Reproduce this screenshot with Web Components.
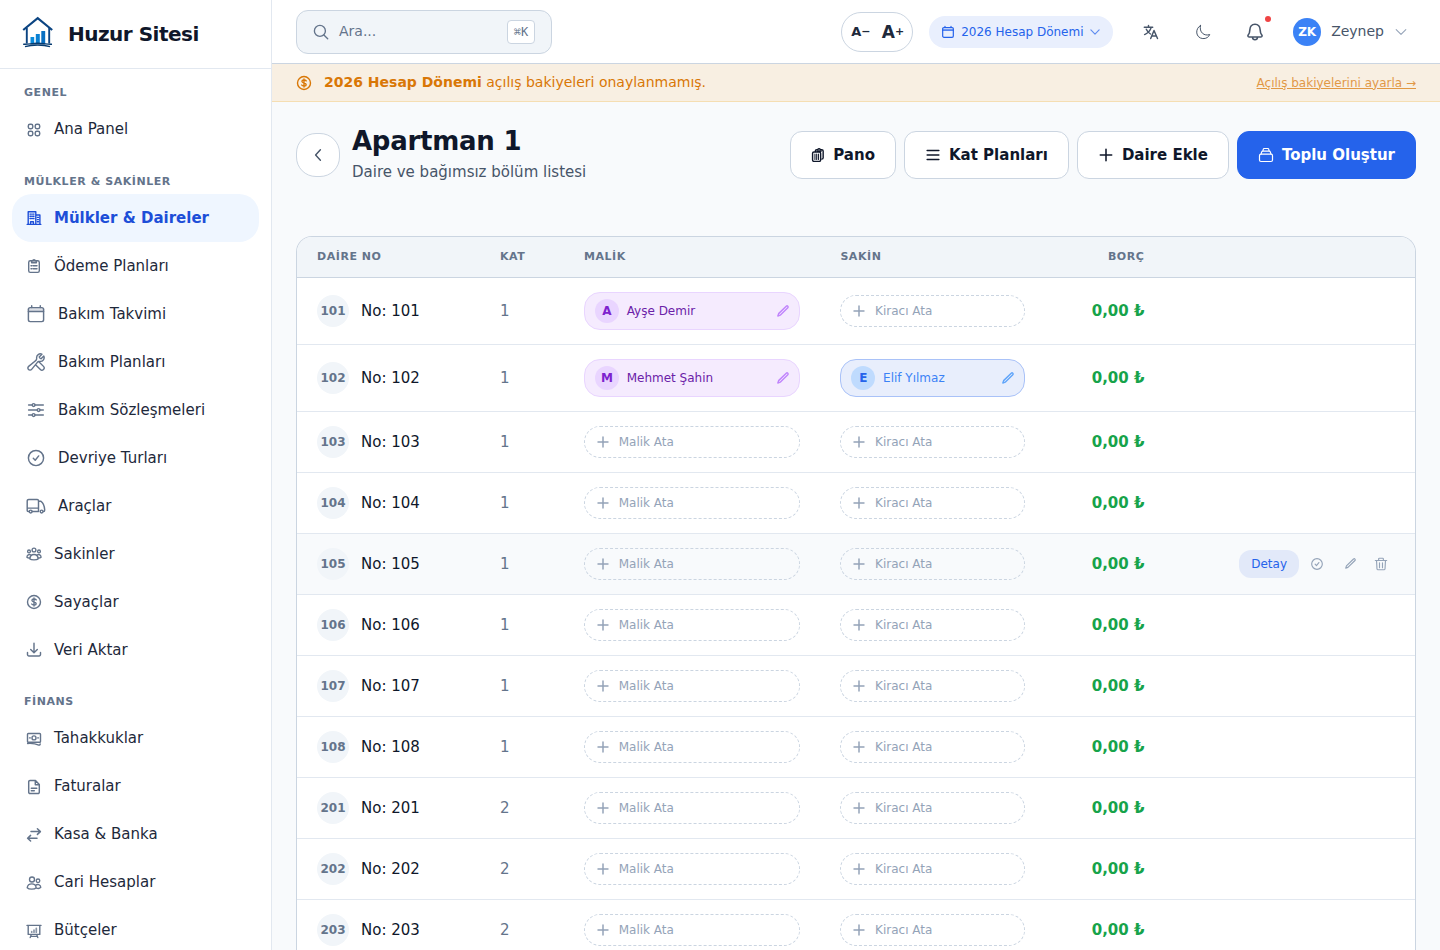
<!DOCTYPE html>
<html lang="tr">
<head>
<meta charset="utf-8">
<title>Huzur Sitesi</title>
<style>
html,body{margin:0;height:100%;overflow:hidden;background:#f8fafc;font-family:"DejaVu Sans",sans-serif;font-size:15px;color:#0f172a}
</style>
</head>
<body>
<site-app></site-app>
<script>
function define(name, render) {
  customElements.define(name, class extends HTMLElement {
    connectedCallback() {
      if (this.shadowRoot) return;
      this.attachShadow({ mode: 'open' }).innerHTML = '<style>*{box-sizing:border-box}</style>' + render(this);
    }
  });
}
const a = (el, n, d = '') => el.getAttribute(n) ?? d;

/* Each entry: [viewBox size, stroke width, markup] */
const ICONS = {
  apps: [16, 1.45, '<rect x="2.300" y="2.300" width="4.500" height="4.500" rx="1.700"/><rect x="9.200" y="2.300" width="4.500" height="4.500" rx="1.700"/><rect x="2.300" y="9.200" width="4.500" height="4.500" rx="1.700"/><rect x="9.200" y="9.200" width="4.500" height="4.500" rx="1.700"/>'],
  building: [16, 1.4, '<path d="M1.200 14.400h13.600M2.200 14.200V1.800h7.600v12.400M9.900 5h4v9.200M4.600 14v-2.300h2.800V14"/><path d="M4 4.100h1.400m1.200 0H8M4 6.300h1.400m1.200 0H8M4 8.500h1.400m1.200 0H8M11.300 7.400h1.200m-1.200 2.200h1.200m-1.200 2.200h1.200"/>'],
  clipboard: [16, 1.4, '<rect x="2.700" y="2.800" width="10.600" height="11.600" rx="1.600"/><path d="M5.600 4.700V2.900h1.200a1.200 1.200 0 0 1 2.400 0h1.200v1.800z"/><path d="M5 7.700h.9M7.200 7.700H11M5 10.700h.9M7.200 10.700H11"/>'],
  calendar: [20, 1.45, '<rect x="2.400" y="3.600" width="15.200" height="14" rx="1.800"/><path d="M2.400 7.400h15.200M5.700 3.400V1.800m8.600 1.600V1.800"/><path d="M3 5.500h14" stroke-width="3" opacity=".22"/>'],
  tools: [24, 1.7, '<path d="M11.420 15.170L17.250 21A2.652 2.652 0 0021 17.250l-5.877-5.877M11.420 15.170l2.496-3.030c.317-.384.740-.626 1.208-.766M11.420 15.170l-4.655 5.653a2.548 2.548 0 11-3.586-3.586l6.837-5.630m5.108-.233c.550-.164 1.163-.188 1.743-.140a4.500 4.500 0 004.486-6.336l-3.276 3.277a3.004 3.004 0 01-2.250-2.250l3.276-3.276a4.500 4.500 0 00-6.336 4.486c.091 1.076-.071 2.264-.904 2.950l-1.847 1.522-1.745 1.437"/>'],
  sliders: [20, 1.45, '<path d="M2.600 5h3.700m2.800 0h8.200M2.600 10h8.600m2.800 0h3.300M2.600 15h3.700m2.800 0h8.200"/><circle cx="7.600" cy="5" r="1.400"/><circle cx="12.600" cy="10" r="1.400"/><circle cx="7.600" cy="15" r="1.400"/>'],
  check: [20, 1.45, '<circle cx="10" cy="10" r="7.600"/><path d="M7.300 10.300l1.900 1.900 3.500-4.300"/>'],
  truck: [20, 1.45, '<path d="M3.100 15.400H2.200a1 1 0 0 1-1-1V5a1.600 1.600 0 0 1 1.600-1.600h8.400A1.300 1.300 0 0 1 12.500 4.700v10.700H6.300M1.300 12.100h11M12.500 5.300h2.500c2 1.300 3.400 4.600 3.700 8.600 0 1-.3 1.500-1.100 1.500"/><circle cx="4.700" cy="15.500" r="1.400"/><circle cx="15.600" cy="15.500" r="1.400"/>'],
  group: [16, 1.35, '<circle cx="8" cy="4" r="1.900"/><circle cx="3" cy="5.400" r="1.400"/><circle cx="13" cy="5.400" r="1.400"/><path d="M3.900 13c0-3 1.700-4.500 4.100-4.500s4.100 1.500 4.100 4.500c-1.200 1.200-7 1.200-8.200 0z"/><path d="M4.500 8.800C3 8 1 8.800.9 11.200c.8.700 1.800.9 2.800.8M11.500 8.800c1.500-.8 3.500 0 3.600 2.400-.8.700-1.800.9-2.800.8"/>'],
  coin: [16, 1.4, '<circle cx="8" cy="8" r="6.500"/><path d="M10.200 5.900C9.500 4.600 6 4.500 5.900 6.400 5.800 8.400 10.200 7.500 10.200 9.700c0 1.900-3.700 1.800-4.500.3M8 3.900v8.200"/>'],
  download: [16, 1.45, '<path d="M8 1.300v9.200M4.700 7.500L8 10.700l3.300-3.200M1.500 10.400v2.200a1.400 1.400 0 0 0 1.400 1.400h10.200a1.400 1.400 0 0 0 1.400-1.400v-2.200"/>'],
  cash: [16, 1.4, '<rect x="1.500" y="2.500" width="13" height="8.800" rx=".8"/><circle cx="8" cy="6.900" r="2"/><path d="M3.500 6.900h.8m7.400 0h.8M1.600 12.500c4.600-.3 8 .1 11.200 1.600.8.100 1.300-.2 1.400-1.200"/>'],
  file: [16, 1.45, '<path d="M9.500 1.500H4a1.300 1.300 0 0 0-1.300 1.300v10.400A1.300 1.300 0 0 0 4 14.500h8a1.300 1.300 0 0 0 1.300-1.300V5.500zM9.300 1.700v4h3.900M5.300 9.300h5.500M5.300 11.700h3"/>'],
  swap: [16, 1.5, '<path d="M5 4.600h9.200M11.400 1.800l3 2.800-3 2.800M11 11.200H1.800M4.600 8.400l-3 2.800 3 2.800"/>'],
  users: [16, 1.35, '<circle cx="6" cy="4.500" r="2.500"/><circle cx="12" cy="5.800" r="1.800"/><path d="M1.200 12.700C1.600 10 3.300 8.800 5.800 8.800s4 1.200 4.400 3.900c-1.600 1.900-7.300 1.900-9 0zM9.800 10.300c1.500-1.500 4.700-.8 5 2-.8.900-3 1.300-4.400.8"/>'],
  board: [16, 1.4, '<path d="M1 2.400h14M2.200 2.500v8.900h11.600V2.500M5.200 11.600l-1 3m6.600-3l1 3M4.800 13.400h6.400"/><path d="M5.700 9.200v-.5M8 9.200V7.200M10.300 9.200V5.400" stroke-width="1.700" opacity=".75"/>'],
  search: [16, 1.35, '<circle cx="6.900" cy="6.900" r="5.500"/><path d="M10.900 10.900l3.800 3.800"/>'],
  chevron: [16, 1.2, '<path d="M2.500 5.200L8 10.800l5.500-5.600"/>'],
  back: [16, 1.4, '<path d="M10.400 2.700L5.600 8l4.800 5.300"/>'],
  lang: [16, 1.45, '<path d="M1.300 3.200h8.400M5.500 1.500v1.700M8.200 3.400C7.200 7 4.800 9.300 1.600 10.600M3.300 5.200c1 2.300 2.500 3.800 4.200 4.800M7.700 14.500l3.300-8 3.500 8M8.900 12h4.500"/>'],
  moon: [16, 1, '<path d="M5.500 1.500C-.3 4.600.5 13.900 7.800 14.600c3.500.2 6-1.600 6.900-4.100C9.400 12.500 3.800 8.400 5.500 1.500z"/>'],
  bell: [20, 1.55, '<path d="M4.100 14.900h11.800c1.400 0 1.500-1.300.8-2-1.300-1.300-1.400-2.500-1.500-4.800C15 4.600 13.300 2.300 10 2.300S5 4.600 4.800 8.100c-.1 2.300-.2 3.500-1.500 4.800-.7.700-.6 2 .8 2zM7.500 15.200c.2 3.300 4.800 3.300 5 0"/>'],
  plus: [16, 1.55, '<path d="M8 2.300v11.400M2.300 8h11.400"/>'],
  menu: [16, 1.6, '<path d="M2.200 3.500h11.600M2.200 8h11.600M2.200 12.500h11.600"/>'],
  pano: [16, 1.6, '<path d="M5 4V3.200C5 2.300 5.500 2 6.500 2h1a1.800 1.800 0 0 1 3.400 0h1.400c1.100 0 1.600.5 1.600 1.500v7.700c0 1-.5 1.500-1.600 1.500"/><path d="M11 13.800c0 1-.4 1.500-1.400 1.500H3.300c-1 0-1.500-.5-1.500-1.500V6c0-1 .5-1.500 1.500-1.500h6.300c1 0 1.400.5 1.400 1.500zM7.200 3.500h4.500"/><path d="M4.500 7v6M6.500 7v6M8.500 7v6" stroke-width="1.200"/>'],
  stack: [16, 1.2, '<rect x="1.500" y="7.200" width="13" height="7.300" rx="1.500"/><path d="M3.100 6.800l.5-1.700c.2-.6.500-.9 1.200-.9h6.400c.7 0 1 .3 1.200.9l.5 1.700M4.800 4l.4-1.600c.1-.6.500-.9 1.100-.9h3.400c.6 0 1 .3 1.100.9l.4 1.600"/>'],
  pencil: [16, 1.4, '<path d="M11.700 2.500a1.200 1.200 0 0 1 1.800 1.800L4.800 12.800l-2.700.9.900-2.700z"/>'],
  trash: [16, 1.3, '<path d="M1.500 4h13M5.300 3.800V2.200c0-.5.3-.8.8-.8h3.800c.5 0 .8.3.8.8v1.600M2.900 4.200l.5 9.200c.1.800.5 1.200 1.200 1.200h6.800c.7 0 1.100-.4 1.200-1.200l.5-9.200M6.300 6.600v5.600M9.700 6.600v5.600"/>']
};
define('ui-icon', el => {
  const [v, w, m] = ICONS[a(el, 'name')], s = a(el, 'size', '16');
  return `<style>:host{display:block;flex:none;width:${s}px;height:${s}px}svg{display:block}</style>
  <svg width="${s}" height="${s}" viewBox="0 0 ${v} ${v}" fill="none" stroke="currentColor" stroke-width="${a(el, 'weight', w)}" stroke-linecap="round" stroke-linejoin="round">${m}</svg>`;
});

define('site-logo', () => `<style>:host{display:block;width:32px;height:32px}svg{display:block}</style>
<svg width="32" height="32" viewBox="0 0 32 32" fill="none">
<path d="M1.200 14L15.700 2.200 30.200 14" stroke="#0b4482" stroke-width="2.200"/>
<path d="M4.800 12v15.500M27.200 12v15.500" stroke="#0b4482" stroke-width="1.900"/>
<path d="M8.500 21h3.700v7H8.500z" fill="#0a8bdc"/><path d="M13.800 18h4v10h-4z" fill="#0a80d3"/><path d="M19.300 15h3.900v13h-3.900z" fill="#086fc2"/>
<path d="M1.200 28.200c4.300.6 8-.9 14.500-.9s10.500 1.500 14.300.9M3 30.600c7-2.200 18.500-2.200 25 0" stroke="#063b70" stroke-width="1.400"/></svg>`);

define('nav-heading', el => `<style>:host{display:flex;align-items:flex-end;padding:0 12px 4.500px;height:${a(el, 'height', '40.5')}px;box-sizing:border-box;font-size:11px;line-height:16px;font-weight:700;letter-spacing:.55px;color:#64748b}</style><slot></slot>`);

define('nav-item', el => `<style>
:host{display:flex;align-items:center;gap:12px;height:48px;box-sizing:border-box;padding:0 14px;border-radius:20px;color:#1e293b;line-height:20px}
:host([active]){background:#eff6ff;color:#1d4ed8;font-weight:700}
ui-icon{color:#64748b}:host([active]) ui-icon{color:#1d4ed8}
span{display:block;padding-bottom:.4px}
</style><ui-icon name="${a(el, 'icon')}" size="${a(el, 'size', '16')}"></ui-icon><span><slot></slot></span>`);

define('side-bar', () => `<style>
:host{display:flex;flex-direction:column;width:272px;height:950px;box-sizing:border-box;background:#fff;border-right:1px solid #e2e8f0;overflow:hidden;flex:none}
.brand{height:69px;flex:none;display:flex;align-items:center;gap:14px;padding:0 22px;border-bottom:1px solid #e2e8f0;font-size:20px;font-weight:700;letter-spacing:-.5px}
.brand site-logo{margin-top:-4px}
nav{padding:0 12px}
</style>
<div class="brand"><site-logo></site-logo><span>Huzur Sitesi</span></div>
<nav>
<nav-heading height="36.5">GENEL</nav-heading>
<nav-item icon="apps">Ana Panel</nav-item>
<nav-heading>MÜLKLER &amp; SAKİNLER</nav-heading>
<nav-item icon="building" active>Mülkler &amp; Daireler</nav-item>
<nav-item icon="clipboard">Ödeme Planları</nav-item>
<nav-item icon="calendar" size="20">Bakım Takvimi</nav-item>
<nav-item icon="tools" size="20">Bakım Planları</nav-item>
<nav-item icon="sliders" size="20">Bakım Sözleşmeleri</nav-item>
<nav-item icon="check" size="20">Devriye Turları</nav-item>
<nav-item icon="truck" size="20">Araçlar</nav-item>
<nav-item icon="group">Sakinler</nav-item>
<nav-item icon="coin">Sayaçlar</nav-item>
<nav-item icon="download">Veri Aktar</nav-item>
<nav-heading>FİNANS</nav-heading>
<nav-item icon="cash">Tahakkuklar</nav-item>
<nav-item icon="file">Faturalar</nav-item>
<nav-item icon="swap">Kasa &amp; Banka</nav-item>
<nav-item icon="users">Cari Hesaplar</nav-item>
<nav-item icon="board">Bütçeler</nav-item>
</nav>`);

define('search-box', () => `<style>
:host{display:flex;align-items:center;width:256px;height:44px;box-sizing:border-box;padding:0 16px;border:1px solid #cbd5e1;border-radius:12px;background:#f1f5f9;color:#64748b;font-size:14px}
span{flex:1;margin-left:10px;line-height:20px;margin-top:-2px}
kbd{width:28px;height:24px;display:flex;align-items:center;justify-content:center;border:1px solid #cbd5e1;border-radius:4px;background:#fff;font:12px "DejaVu Sans Mono",monospace}
</style><ui-icon name="search"></ui-icon><span>Ara...</span><kbd>⌘K</kbd>`);

define('font-sizer', () => `<style>
:host{display:flex;align-items:center;justify-content:space-between;width:72px;height:40px;box-sizing:border-box;padding:0 8px 0 9px;border:1px solid #cbd5e1;border-radius:20px;background:#fff;color:#1e293b;font-weight:700}
span{display:flex;align-items:center;line-height:20px}i{font-style:normal;font-size:11px}
.s{font-size:13px}.l{font-size:17px}
</style><span class="s">A<i>−</i></span><span class="l">A<i>+</i></span>`);

define('period-picker', () => `<style>
:host{display:flex;align-items:center;width:184px;height:32px;box-sizing:border-box;padding:0 12px;border-radius:16px;background:#e9effd;color:#2563eb;font-size:12px}
span{flex:1;margin-left:6px;white-space:nowrap}.d{opacity:.7}
</style><ui-icon name="calendar" size="14" weight="1.7"></ui-icon><span>2026 Hesap Dönemi</span><ui-icon class="d" name="chevron" size="12" weight="1.5"></ui-icon>`);

define('user-menu', () => `<style>
:host{display:flex;align-items:center;color:#475569;font-size:14px}
b{width:28px;height:28px;border-radius:50%;background:#3b82f6;color:#fff;font-size:12px;display:flex;align-items:center;justify-content:center}
span{margin:-1px 10px 0 10px}.d{color:#94a3b8}
</style><b>ZK</b><span>Zeynep</span><ui-icon class="d" name="chevron" size="14"></ui-icon>`);

define('top-bar', () => `<style>
:host{display:flex;align-items:center;justify-content:space-between;height:64px;box-sizing:border-box;padding:0 32px 0 24px;background:#fff;border-bottom:1px solid #cbd5e1;flex:none;color:#475569}
.r{display:flex;align-items:center}
.r period-picker{margin:0 16px}
.btn{width:44px;height:44px;margin-right:8px;display:flex;align-items:center;justify-content:center;position:relative}
.btn i{position:absolute;width:6px;height:6px;border-radius:50%;background:#ef4444;left:32px;top:6px}
user-menu{margin-left:8px}
</style>
<search-box></search-box>
<div class="r"><font-sizer></font-sizer><period-picker></period-picker>
<div class="btn"><ui-icon name="lang"></ui-icon></div><div class="btn"><ui-icon name="moon"></ui-icon></div><div class="btn"><ui-icon name="bell" size="20"></ui-icon><i></i></div>
<user-menu></user-menu></div>`);

define('notice-bar', () => `<style>
:host{display:flex;align-items:center;height:38px;box-sizing:border-box;padding:0 24px;background:#f8efe2;border-bottom:1px solid #f5deb3;color:#d97706;font-size:14px;flex:none}
span{margin-left:12px;flex:1;margin-top:-1px}a{font-size:12px;text-decoration:underline;opacity:.72}
</style><ui-icon name="coin"></ui-icon><span><b>2026 Hesap Dönemi</b> açılış bakiyeleri onaylanmamış.</span><a>Açılış bakiyelerini ayarla →</a>`);

define('action-button', el => `<style>
:host{display:flex;align-items:center;gap:8px;height:48px;box-sizing:border-box;padding:0 20px;border:1px solid #cbd5e1;border-radius:12px;background:#fff;color:#0f172a;font-weight:700;line-height:20px;white-space:nowrap}
:host([primary]){background:#2563eb;border-color:#2563eb;color:#fff}
</style><ui-icon name="${a(el, 'icon')}" size="${a(el, 'size', '16')}"></ui-icon><slot></slot>`);

define('page-head', () => `<style>
:host{display:flex;align-items:flex-start;padding:21px 24px 0;height:134px;box-sizing:border-box;flex:none}
.back{width:44px;height:44px;margin:10px 12px 0 0;border:1px solid #cbd5e1;border-radius:20px;background:#fff;color:#475569;display:flex;align-items:center;justify-content:center}
.t{flex:1}h1{margin:0;font-size:26px;line-height:36px;letter-spacing:-.26px}p{margin:3px 0 0;line-height:20px;color:#475569}
.a{display:flex;gap:8px;margin-top:8px}
</style><div class="back"><ui-icon name="back"></ui-icon></div>
<div class="t"><h1>Apartman 1</h1><p>Daire ve bağımsız bölüm listesi</p></div>
<div class="a"><action-button icon="pano" size="14">Pano</action-button><action-button icon="menu">Kat Planları</action-button><action-button icon="plus">Daire Ekle</action-button><action-button icon="stack" primary>Toplu Oluştur</action-button></div>`);

define('assign-chip', () => `<style>
:host{display:flex;align-items:center;height:32px;box-sizing:border-box;padding:0 11px;border:1px dashed #cbd5e1;border-radius:16px;color:#94a3b8;font-size:12px}
span{margin-left:8.700px}
</style><ui-icon name="plus" size="14" weight="1.7"></ui-icon><span><slot></slot></span>`);

define('person-chip', el => `<style>
:host{display:flex;align-items:center;height:38px;box-sizing:border-box;padding:0 9px 0 10px;border:1px solid #e9d5ff;border-radius:16px;background:#f5ebfe;color:#6b21a8;font-size:12px}
b{width:24px;height:24px;border-radius:50%;background:#e9d5ff;color:#7e22ce;display:flex;align-items:center;justify-content:center}
span{flex:1;margin-left:7.700px}ui-icon{color:#c084fc}
:host([tenant]){background:#e8eefc;border-color:#a9c2f8;color:#3b82f6}
:host([tenant]) b{background:#bfdbfe;color:#2563eb}:host([tenant]) ui-icon{color:#60a5fa}
</style><b>${a(el, 'initial')}</b><span><slot></slot></span><ui-icon name="pencil" size="14" weight="1.6"></ui-icon>`);

const COLS = 'grid-template-columns:183px 84px 256.400px 224.600px 119.400px 1fr';
define('unit-row', el => {
  const no = a(el, 'no'), owner = a(el, 'owner'), tenant = a(el, 'tenant');
  return `<style>
:host{display:grid;${COLS};align-items:center;height:${owner ? 67 : 61}px;box-sizing:border-box;border-bottom:1px solid #e2e8f0;background:#fff}
:host([hovered]){background:#f8fafc}
div{padding:0 20px}.n{display:flex;align-items:center;gap:12px}
.n b{width:32px;height:32px;border-radius:50%;background:#f1f5f9;color:#64748b;font-size:12px;display:flex;align-items:center;justify-content:center;flex:none}
.k{color:#64748b}.d{text-align:right;font-weight:700;color:#16a34a;white-space:nowrap}
.x{display:flex;align-items:center;justify-content:flex-end;padding-right:27px;color:#94a3b8}
.x em{font-style:normal;font-size:12px;height:28px;padding:0 12px;border-radius:12px;background:#e2e9f9;color:#2563eb;display:flex;align-items:center;margin-right:11px}
</style>
<div class="n"><b>${no}</b><span>No: ${no}</span></div><div class="k">${no[0]}</div>
<div>${owner ? `<person-chip initial="${owner[0]}">${owner}</person-chip>` : '<assign-chip>Malik Ata</assign-chip>'}</div>
<div>${tenant ? `<person-chip tenant initial="${tenant[0]}">${tenant}</person-chip>` : '<assign-chip>Kiracı Ata</assign-chip>'}</div>
<div class="d">0,00 ₺</div>
<div class="x">${el.hasAttribute('hovered') ? '<em>Detay</em><ui-icon name="check" size="14" weight="1.6"></ui-icon><ui-icon name="pencil" size="13" style="margin:-2px 17px 0 20px"></ui-icon><ui-icon name="trash" size="14"></ui-icon>' : ''}</div>`;
});

define('unit-table', () => `<style>
:host{display:block;margin:0 24px;border:1px solid #cbd5e1;border-radius:16px 16px 0 0;border-bottom:0;background:#fff;overflow:hidden;flex:1;min-height:0}
.h{display:grid;${COLS};align-items:center;height:41px;padding-bottom:2px;background:#f1f5f9;border-bottom:1px solid #cbd5e1;font-size:11px;font-weight:700;letter-spacing:.55px;color:#64748b}
.h span{padding:0 20px}.h .e{text-align:right}
</style><div class="h"><span>DAİRE NO</span><span>KAT</span><span>MALİK</span><span>SAKİN</span><span class="e">BORÇ</span></div>
<unit-row no="101" owner="Ayşe Demir"></unit-row>
<unit-row no="102" owner="Mehmet Şahin" tenant="Elif Yılmaz"></unit-row>
${[103, 104, 105, 106, 107, 108, 201, 202, 203].map(n => `<unit-row no="${n}"${n === 105 ? ' hovered' : ''}></unit-row>`).join('')}`);

define('site-app', () => `<style>
:host{display:flex;width:1440px;height:950px;overflow:hidden;background:#f8fafc}
main{flex:1;display:flex;flex-direction:column;min-width:0}
</style><side-bar></side-bar><main><top-bar></top-bar><notice-bar></notice-bar><page-head></page-head><unit-table></unit-table></main>`);
</script>
</body>
</html>
